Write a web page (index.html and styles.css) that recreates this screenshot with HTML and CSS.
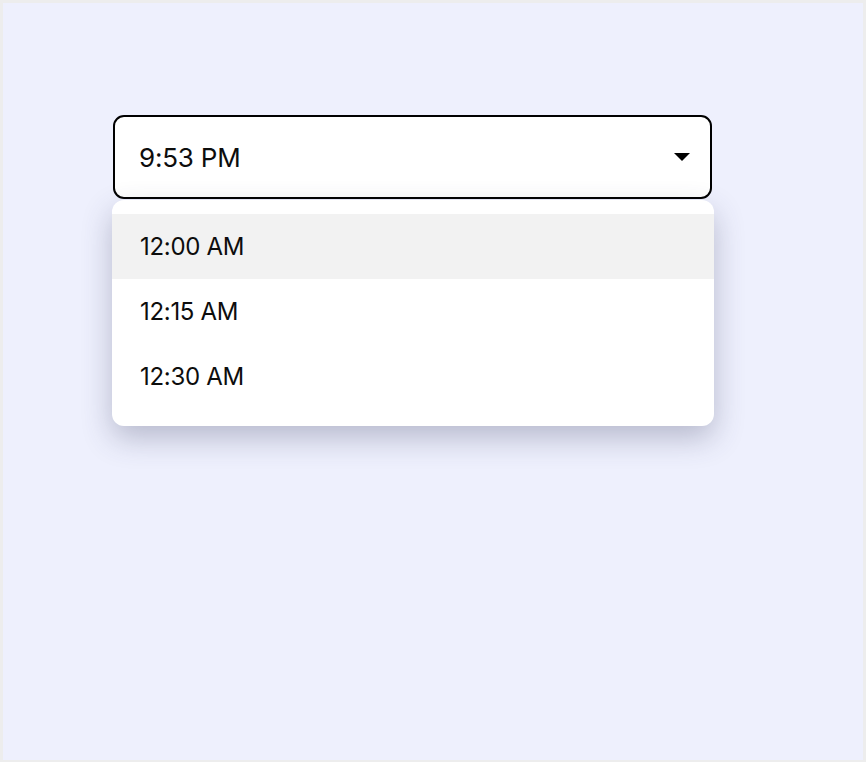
FILE: index.html
```html
<!DOCTYPE html>
<html>
<head>
<meta charset="utf-8">
<link rel="stylesheet" href="styles.css">
</head>
<body>
<div class="frame">
  <div class="picker">
    <div class="select">
      <span class="value">9:53 PM</span>
      <svg class="caret" width="16" height="8" viewBox="0 0 16 8"><path d="M0 0 H16 L8 8 Z" fill="#000"/></svg>
    </div>
    <ul class="menu">
      <li class="item active">12:00 AM</li>
      <li class="item">12:15 AM</li>
      <li class="item">12:30 AM</li>
    </ul>
  </div>
</div>
</body>
</html>
```

FILE: styles.css
```css
html, body {
  margin: 0;
  padding: 0;
  background: #ededed;
}
.frame {
  margin: 3px 3px 2px 3px;
  height: 757px;
  background: #eef0fd;
  box-sizing: border-box;
  padding: 112px 0 0 110px;
  font-family: Inter, "Noto Sans", sans-serif;
  color: #0d0d0d;
}
.picker {
  position: relative;
  width: 599px;
}
.select {
  box-sizing: border-box;
  height: 84px;
  border: 2px solid #000;
  border-radius: 11px;
  background: #fff;
  display: flex;
  align-items: center;
  justify-content: space-between;
  padding: 0 20px 0 24px;
}
.value {
  font-size: 26px;
  letter-spacing: -0.2px;
}
.caret {
  display: block;
}
.menu {
  position: absolute;
  left: -1px;
  top: 85px;
  width: 602px;
  margin: 0;
  padding: 14px 0 17px;
  list-style: none;
  background: #fff;
  border-radius: 12px;
  box-shadow: 0 12px 30px rgba(55, 60, 95, 0.3);
}
.item {
  height: 65px;
  display: flex;
  align-items: center;
  padding-left: 28px;
  font-size: 24px;
  letter-spacing: -0.3px;
}
.item.active {
  background: #f2f2f2;
}
```
